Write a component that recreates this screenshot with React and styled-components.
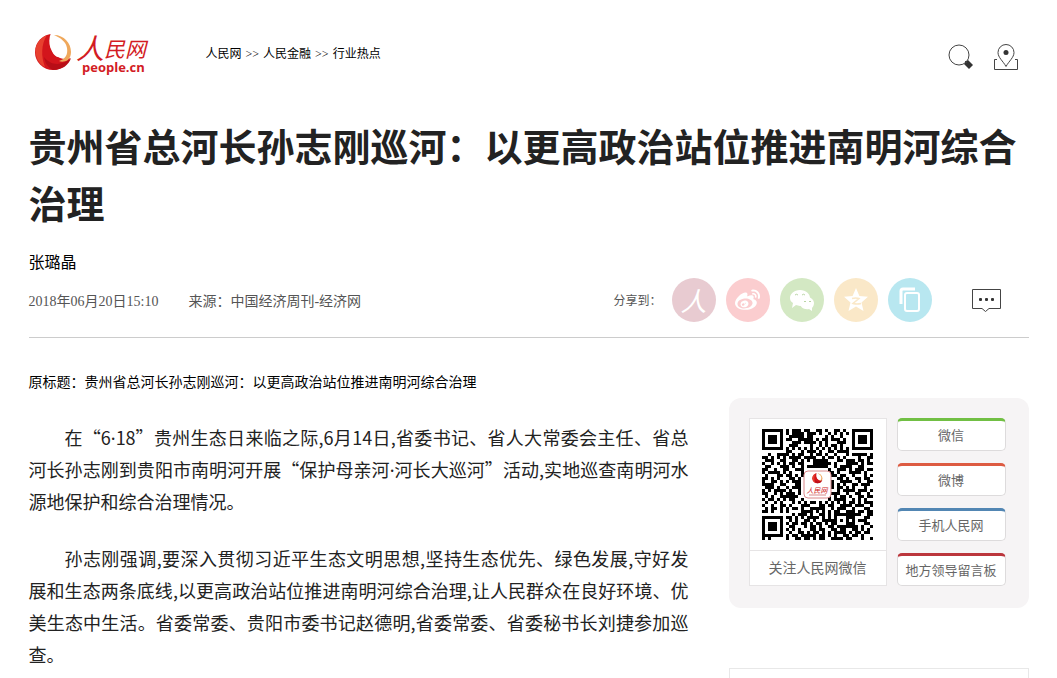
import React from 'react';
import styled, { createGlobalStyle } from 'styled-components';
import { FaWeibo } from 'react-icons/fa';

const GlobalStyle = createGlobalStyle`
body {
  margin: 0;
  background: #fff;
  color: #000;
  font-family: "Liberation Serif", "Noto Sans CJK SC", sans-serif;
}
`;
const Page = styled.div`
max-width: 1000px;
margin: 0 auto;
padding: 0 28px;
`;
const Header = styled.header`
display: flex;
align-items: center;
height: 107px;
`;
const LogoLink = styled.a`
display: block;
width: 118px;
height: 46px;
margin-left: 5px;
`;
const Crumbs = styled.nav`
display: flex;
flex: 1;
gap: 4px;
margin-left: 54px;
font-size: 12px;
line-height: 20px;
`;
const CrumbLink = styled.a`
color: #000;
text-decoration: none;
`;
const Tools = styled.div`
display: flex;
gap: 20px;
margin-right: 11px;
padding-top: 6px;
`;
const IconButton = styled.button`
display: block;
padding: 0;
border: 0;
background: none;
line-height: 0;
cursor: pointer;
`;
const Title = styled.h1`
margin: 9px 0 0;
color: #222;
font-family: "Noto Sans CJK SC", sans-serif;
font-size: 38px;
font-weight: bold;
line-height: 57px;
`;
const Author = styled.p`
margin: 20px 0 0;
font-size: 16px;
line-height: 26px;
`;
const Meta = styled.div`
display: flex;
align-items: center;
height: 44px;
padding: 2px 0 15px;
border-bottom: 1px solid #ccc;
color: #555;
font-size: 14px;
`;
const MetaTime = styled.time`
margin-right: 30px;
`;
const Source = styled.span`
flex: 1;
`;
const Share = styled.div`
display: flex;
align-items: center;
gap: 10px;
font-size: 12px;
`;
const ShareButton = styled.button`
display: flex;
align-items: center;
justify-content: center;
width: 44px;
height: 44px;
padding: 0;
border: 0;
border-radius: 50%;
background: ${props => props.$color};
color: #fff;
cursor: pointer;
`;
const PeopleMark = styled.span`
font-family: "Noto Sans CJK SC", sans-serif;
font-size: 26px;
font-style: italic;
line-height: 30px;
`;
const Comment = styled(IconButton)`
margin: 0 28px 0 40px;
`;
const Columns = styled.div`
display: flex;
justify-content: space-between;
gap: 40px;
`;
const Article = styled.article`
flex: 1;
padding-top: 34px;
`;
const OriginTitle = styled.p`
margin: 0;
font-size: 14px;
line-height: 22px;
`;
const Paragraph = styled.p`
margin: 25px 0 0;
color: #222;
font-family: "Noto Sans CJK SC", sans-serif;
font-size: 18px;
line-height: 32px;
text-align: justify;
text-indent: 2em;
`;
const Dot = styled.span`
font-family: "Noto Sans", sans-serif;
line-height: 1;
`;
const Body = styled.div`
padding-top: 2px;
`;
const Sidebar = styled.aside`
flex: none;
width: 300px;
padding-top: 60px;
`;
const Panel = styled.div`
display: flex;
gap: 10px;
box-sizing: border-box;
height: 210px;
padding: 20px;
border-radius: 12px;
background: #f6f4f5;
`;
const CodeCard = styled.figure`
box-sizing: border-box;
width: 138px;
height: 168px;
margin: 0;
border: 1px solid #e6e4e5;
background: #fff;
`;
const CodeBox = styled.div`
height: 121px;
padding: 10px 12px 0;
border-bottom: 1px solid #e6e4e5;
`;
const CodeCaption = styled.figcaption`
color: #666;
font-size: 14px;
line-height: 36px;
text-align: center;
`;
const Channels = styled.div`
display: flex;
flex-direction: column;
gap: 12px;
width: 109px;
`;
const ChannelLink = styled.a`
box-sizing: border-box;
height: 33px;
border: 1px solid #dddbdc;
border-top: 3px solid ${props => props.$color};
border-radius: 5px;
background: #fff;
color: #666;
font-size: 13px;
line-height: 30px;
text-align: center;
text-decoration: none;
`;
const NextBox = styled.div`
height: 9px;
margin-top: 60px;
border: 1px solid #e8e8e8;
border-bottom: 0;
`;

const qrRows = [
  '#######.#.###.##..##.#..##.#..#######',
  '#.....#.#.####.###.#..#.#.#.#.#.....#',
  '#.###.#..#####.##....#.#..#...#.###.#',
  '#.###.#.##..#####.#.##.###.#..#.###.#',
  '#.###.#...###.####.#.#...###..#.###.#',
  '#.....#..###....#..#.#.##.#...#.....#',
  '#######.#.#.#.#.#.#.#.#.#.#.#.#######',
  '........##...#.###.#..##.####........',
  '..#..####.#.##..#.##.#..#...#.#####.#',
  '##.#.#.#.####.####..#.##.#.#....#..##',
  '.###..##..##.#.#.#####...##.###.##.#.',
  '#..#.#.#.##.##...######.#...####.#.##',
  '.##...###.#..#.#######..#.####..##...',
  '##..#..##..###........#..###.#.###.##',
  '#.####.#.#...#........##.#...####.#..',
  '.#...##.##.#.#.........##.##..#...#.#',
  '##.#.#...##.#.........#..##.#..##.##.',
  '#..##.#.#.###.........##..####..#..##',
  '####..##...##..........#.#.#..##.###.',
  '.###.#..#.###.........##.##.#.#...#..',
  '#.#.####.#..#.........#..#.####.###.#',
  '##..#.#.###.#.........####..#..##..#.',
  '.#.#..######..........#.#.##.#..##.##',
  '#.##.#.#.##..#........#.####..#.#.#..',
  '.#..#.#...#.#.#.##.#.#.#.#.#.##.#.###',
  '#..#..##.#...###...##.##..####.###..#',
  '.#.##.#.#.##.#..#####..#.###..#...##.',
  '##.#..#.#....####.#.#.#.##..###.##.##',
  '..........#.###.#..##.#.#########..##',
  '#######.##.#.#.####.#.#.#...###...##.',
  '#.....#..#.#..##.#..#####.#.#.#.###..',
  '#.###.#.#.##.##.#.##.#.##...###...##.',
  '#.###.#..##...#.##.#..##.#######.#..#',
  '#.###.#.#.#.#...##.##..##.##..##.#.#.',
  '#.....#..#..##.#.##.#.#.####.#.##.##.',
  '#######.#.##.#####.##.#.#..##.##.#...',
  '#.#.....#..##.##.#.##..####.##...#..#',
];

const shareItems = [
  { name: '人民微博', color: '#e8cbd1', icon: <PeopleMark>人</PeopleMark> },
  { name: '微博', color: '#fbcdcf', icon: <FaWeibo size={25} /> },
  { name: '微信', color: '#d3e8c3', icon: <ChatIcon /> },
  { name: 'QQ空间', color: '#fae8c8', icon: <StarIcon /> },
  { name: '复制', color: '#b8e7f0', icon: <CopyIcon /> },
];

const channels = [
  { name: '微信', color: '#71bf44' },
  { name: '微博', color: '#dd5b42' },
  { name: '手机人民网', color: '#5286b3' },
  { name: '地方领导留言板', color: '#bb363c' },
];

function Swirl() {
  return (
    <g>
      <circle cx="19" cy="19" r="18" fill="#d3151c" />
      <path d="M13 2C4 6 0 14 2 22c1 6 5 10 9 12C7 24 7 11 13 2z" fill="#e8402f" />
      <path d="M17 0c-4 9-1 21 9 25 5 2 9 1 12-1L40 0z" fill="#fff" />
      <path d="M20 2c10 0 17 8 17 17 0 3-1 6-3 8-3 2-7 2-9 1 7-2 9-7 8-13-1-6-6-10-13-13z" fill="#efa85c" />
      <path d="M18 7c0 6 3 10 8 11 3 0 5-1 6-4 1 6-2 10-7 10-6 0-9-8-7-17z" fill="#fff" />
      <path d="M10 24c6 8 17 10 27 1-2 7-9 12-18 12-5-2-8-7-9-13z" fill="#b80e17" />
    </g>
  );
}

function Logo() {
  return (
    <svg width="118" height="46" viewBox="0 0 118 46">
      <g transform="translate(0 2)"><Swirl /></g>
      <g fill="#d31c24" fontFamily="Noto Sans CJK SC, sans-serif" fontStyle="italic">
        <text x="42" y="28" fontSize="28">人</text>
        <text x="70" y="26" fontSize="21">民网</text>
      </g>
      <text x="48" y="41" fill="#d31c24" fontFamily="Open Sans, sans-serif" fontSize="13" fontWeight="bold">people.cn</text>
    </svg>
  );
}

function SearchIcon() {
  return (
    <svg width="26" height="26" viewBox="0 0 26 26">
      <circle cx="11" cy="11" r="10" fill="none" stroke="#444" />
      <path d="M16 20l4-4 5 5-4 4z" fill="#333" />
      <path d="M17 17l2 2" stroke="#444" />
    </svg>
  );
}

function PlaceIcon() {
  return (
    <svg width="24" height="26" viewBox="0 0 24 26">
      <path d="M3 15.500H.500v10h23v-10H21" fill="none" stroke="#444" />
      <path d="M12 22.500C9 17 4 13.500 4 8.500a8 8 0 0 1 16 0c0 5-5 8.500-8 14z" fill="#fff" stroke="#444" />
      <circle cx="12" cy="8.500" r="2.500" fill="#333" />
    </svg>
  );
}

function ChatIcon() {
  return (
    <svg width="26" height="24" viewBox="0 0 26 24">
      <path d="M11 2c6 0 10 4 10 8s-4 8-10 8l-4-1-4 3 1-5c-2-1-3-3-3-5 0-4 4-8 10-8z" fill="#fff" />
      <path d="M18 9c4 0 7 3 7 6 0 2-1 4-2 5v3l-3-2c-5 1-9-2-9-6 0-3 3-6 7-6z" fill="#fff" />
      <path d="M6 7q1.500-1.500 3 0M13 7q1.500-1.500 3 0M15 13.500h2M20 13.500h2" fill="none" stroke="#b9d5a4" />
    </svg>
  );
}

function StarIcon() {
  return (
    <svg width="26" height="26" viewBox="0 0 26 26">
      <path d="M13 1l3.400 8 8.600.800-6.500 5.700 2 8.500-7.500-4.500L5.500 24l2-8.500L1 9.800 9.600 9z" fill="#fff" />
      <path d="M9 11.500q4-1 7 0l-6 5q4 1 8 0" fill="none" stroke="#fae8c8" strokeWidth="1.500" />
    </svg>
  );
}

function CopyIcon() {
  return (
    <svg width="22" height="26" viewBox="0 0 22 26" fill="none" stroke="#fff">
      <path d="M2 17V4q0-2 2-2h12" strokeWidth="3" />
      <rect x="6" y="6" width="14" height="18" rx="2" strokeWidth="2" />
    </svg>
  );
}

function CommentIcon() {
  return (
    <svg width="29" height="24" viewBox="0 0 29 24">
      <path d="M.500 1.500h28v19H17l-3.500 3-3.500-3H.500z" fill="none" stroke="#444" />
      <g fill="#333">
        <rect x="7" y="10" width="3" height="3" rx="1" />
        <rect x="13" y="10" width="3" height="3" rx="1" />
        <rect x="19" y="10" width="3" height="3" rx="1" />
      </g>
    </svg>
  );
}

function QrCode() {
  // one path for all the dark modules
  const d = qrRows.map((row, y) => (
    row.split('').map((c, x) => (c === '#' ? `M${x} ${y}h1v1h-1z` : '')).join('')
  )).join('');
  return (
    <svg width="111" height="111" viewBox="0 0 111 111" role="img" aria-label="人民网微信">
      <path d={d} transform="scale(3)" shapeRendering="crispEdges" />
      <rect x="42" y="42" width="27" height="27" rx="4" fill="#fff" stroke="#d9888a" />
      <g transform="translate(50 44) scale(.28)"><Swirl /></g>
      <text x="55" y="64" textAnchor="middle" fill="#cf1820" fontFamily="Noto Sans CJK SC, sans-serif" fontStyle="italic" fontSize="7">人民网</text>
      <path d="M47 66h17" stroke="#d9888a" />
    </svg>
  );
}

class App extends React.Component {
  render() {
    return (
      <Page>
        <GlobalStyle />
        <Header>
          <LogoLink href="#" aria-label="人民网"><Logo /></LogoLink>
          <Crumbs>
            <CrumbLink href="#">人民网</CrumbLink>
            <span>&gt;&gt;</span>
            <CrumbLink href="#">人民金融</CrumbLink>
            <span>&gt;&gt;</span>
            <CrumbLink href="#">行业热点</CrumbLink>
          </Crumbs>
          <Tools>
            <IconButton aria-label="搜索"><SearchIcon /></IconButton>
            <IconButton aria-label="地方"><PlaceIcon /></IconButton>
          </Tools>
        </Header>
        <Title>贵州省总河长孙志刚巡河：以更高政治站位推进南明河综合治理</Title>
        <Author>张璐晶</Author>
        <Meta>
          <MetaTime>2018年06月20日15:10</MetaTime>
          <Source>来源：中国经济周刊-经济网</Source>
          <Share>
            <span>分享到：</span>
            {shareItems.map(item => (
              <ShareButton key={item.name} $color={item.color} aria-label={item.name}>{item.icon}</ShareButton>
            ))}
          </Share>
          <Comment aria-label="评论"><CommentIcon /></Comment>
        </Meta>
        <Columns>
          <Article>
            <OriginTitle>原标题：贵州省总河长孙志刚巡河：以更高政治站位推进南明河综合治理</OriginTitle>
            <Body>
              <Paragraph>在“6<Dot>·</Dot>18”贵州生态日来临之际,6月14日,省委书记、省人大常委会主任、省总河长孙志刚到贵阳市南明河开展“保护母亲河<Dot>·</Dot>河长大巡河”活动,实地巡查南明河水源地保护和综合治理情况。</Paragraph>
              <Paragraph>孙志刚强调,要深入贯彻习近平生态文明思想,坚持生态优先、绿色发展,守好发展和生态两条底线,以更高政治站位推进南明河综合治理,让人民群众在良好环境、优美生态中生活。省委常委、贵阳市委书记赵德明,省委常委、省委秘书长刘捷参加巡查。</Paragraph>
            </Body>
          </Article>
          <Sidebar>
            <Panel>
              <CodeCard>
                <CodeBox><QrCode /></CodeBox>
                <CodeCaption>关注人民网微信</CodeCaption>
              </CodeCard>
              <Channels>
                {channels.map(item => (
                  <ChannelLink key={item.name} href="#" $color={item.color}>{item.name}</ChannelLink>
                ))}
              </Channels>
            </Panel>
            <NextBox />
          </Sidebar>
        </Columns>
      </Page>
    );
  }
}

export default App;
